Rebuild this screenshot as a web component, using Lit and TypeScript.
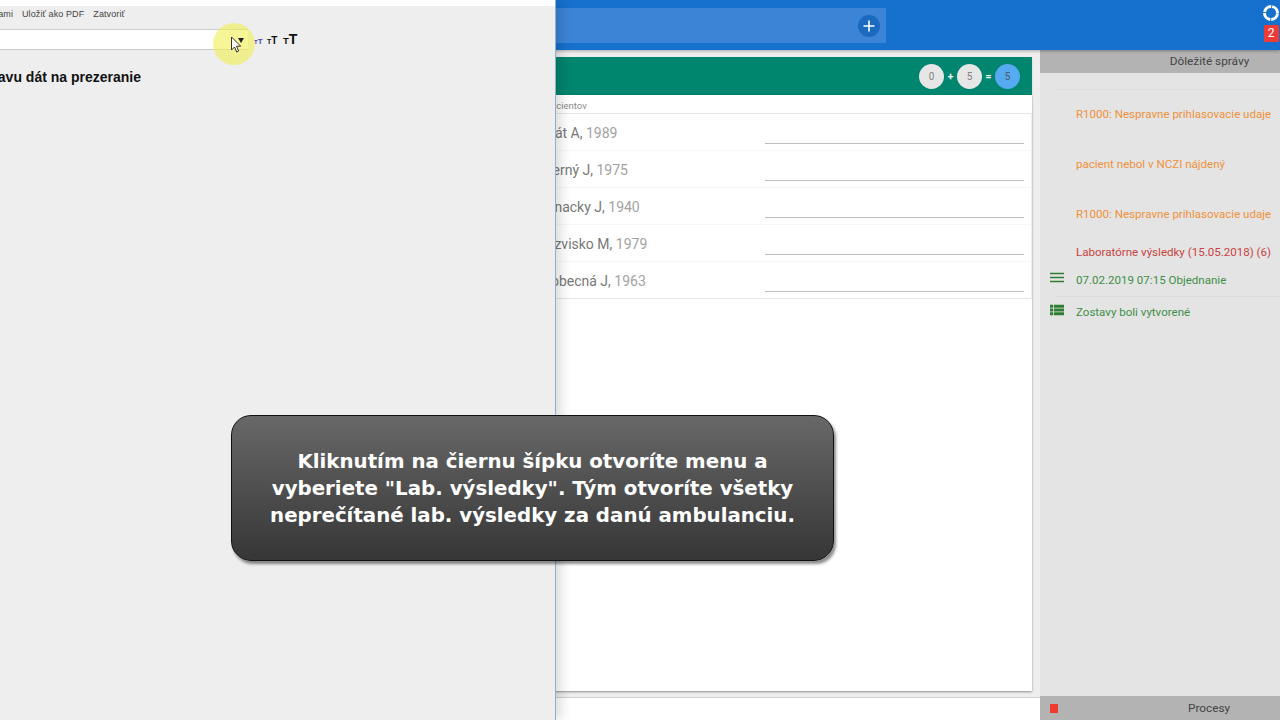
import { LitElement, html, css } from "lit";
import { customElement } from "lit/decorators.js";

const patients = [
  ["Donát A", "1989"],
  ["Ječerný J", "1975"],
  ["Bohnacky J", "1940"],
  ["Priezvisko M", "1979"],
  ["Kmobecná J", "1963"],
];

@customElement("app-root")
export class AppRoot extends LitElement {
  static styles = css`
    :host { display: block; width: 1280px; height: 720px; position: relative; overflow: hidden; font-family: Roboto, "Liberation Sans", sans-serif; background: #eee; }
    .app { display: grid; grid-template-rows: 50px 1fr; height: 720px; }
    .top { background: #1670cd; box-shadow: 0 1px 3px rgba(0,0,0,.3); display: flex; justify-content: space-between; padding: 8px 1px 0 0; z-index: 1; box-sizing: border-box; }
    .search { width: 886px; height: 35px; background: #3b84d6; display: flex; justify-content: flex-end; align-items: center; padding-right: 6px; box-sizing: border-box; }
    .plus { width: 22px; height: 22px; border-radius: 50%; background: #1c69c0; display: grid; place-items: center; }
    .status { display: flex; flex-direction: column; align-items: center; gap: 4px; margin-top: -3px; width: 16px; }
    .badge { background: #ee3b36; color: #fff; font-size: 12px; width: 15px; height: 17px; line-height: 17px; text-align: center; border-radius: 1px; }
    .body { display: grid; grid-template-columns: 1fr 240px; min-height: 0; }
    .main { display: flex; flex-direction: column; min-height: 0; }
    .content { flex: 1; display: flex; flex-direction: column; padding: 7px 8px 0 0; min-height: 0; }
    .teal { height: 38px; background: #00856f; display: flex; justify-content: flex-end; align-items: center; gap: 2.5px; padding-right: 12px; box-shadow: 0 1px 1px rgba(0,0,0,.25); color: #e8f3f0; font-size: 11px; font-weight: 700; flex: none; }
    .count { width: 25px; height: 25px; border-radius: 50%; background: #e6e6e6; color: #808080; font-size: 10px; font-weight: 400; display: grid; place-items: center; }
    .count.total { background: #55aaf0; color: #4a5a68; }
    .op { width: 8px; text-align: center; }
    .card { flex: 1; background: #fff; box-shadow: 0 1px 2px rgba(0,0,0,.4); display: flex; flex-direction: column; }
    .caption { height: 18px; line-height: 22px; padding-left: 509px; font-size: 9.5px; color: #8a8a8a; box-sizing: border-box; flex: none; }
    .rows { border-top: 1px solid #e6e6e6; border-bottom: 1px solid #e6e6e6; border-right: 1px solid #eee; }
    .row { height: 37px; box-sizing: border-box; display: grid; grid-template-columns: 765px 259px; border-bottom: 1px solid #f7f7f7; }
    .row:last-child { border-bottom: 0; height: 36px; }
    .name { padding-left: 530px; line-height: 38px; font-size: 14px; color: #a2a2a2; white-space: nowrap; }
    .name b { font-weight: 400; color: #787878; }
    .line { height: 29px; border-bottom: 1px solid #bdbdbd; }
    .foot { height: 22px; background: #fff; border-top: 1px solid #cfcfcf; margin-top: 6px; flex: none; }
    .side { background: #e4e4e4; display: flex; flex-direction: column; }
    .sidehead { height: 23px; line-height: 23px; background: #b3b3b3; color: #444; font-size: 11.8px; text-align: center; padding-left: 99px; box-sizing: border-box; flex: none; }
    .msgs { flex: 1; padding: 16px 0 0 16px; font-size: 11.55px; }
    .msg { display: grid; grid-template-columns: 20px 1fr; align-items: center; white-space: nowrap; box-sizing: border-box; }
    .msg span { grid-column: 2; }
    .msg svg { grid-column: 1; margin-left: -6px; margin-top: -4px; }
    .msg.o { height: 50px; color: #f0913a; }
    .msg.o:first-child { border-top: 1px solid #ddd; padding-bottom: 2px; }
    .msg.r { height: 27px; padding-bottom: 2px; color: #c9433f; }
    .msg.g { height: 30px; padding-bottom: 2px; color: #3f8f48; }
    .msg.g + .msg.g { height: 32px; padding-bottom: 2px; border-top: 1px solid #dcdcdc; }
    .sidefoot { height: 24px; background: #b3b3b3; display: flex; align-items: center; padding-left: 10px; color: #444; font-size: 11.8px; flex: none; }
    .sidefoot i { width: 8px; height: 9px; background: #ee3b30; }
    .sidefoot span { margin-left: 130px; }
    .win { position: absolute; left: 0; top: 0; width: 555px; height: 720px; background: #eee; border-right: 1px solid #8eb0cc; box-shadow: 4px 0 12px rgba(0,0,0,.16); font-family: "Liberation Sans", Arial, sans-serif; z-index: 2; display: flex; flex-direction: column; }
    .strip { height: 6px; background: #fff; flex: none; }
    .menu { width: 125px; height: 16px; display: flex; justify-content: flex-end; align-items: center; gap: 9px; overflow: hidden; font-size: 9px; letter-spacing: .1px; color: #444; white-space: nowrap; flex: none; }
    .tools { display: flex; align-items: center; flex: none; height: 21px; margin-top: 7px; }
    .input { width: 248px; height: 21px; background: #fff; border-top: 1px solid #ccc; border-bottom: 1px solid #ccc; box-sizing: border-box; display: flex; justify-content: flex-end; padding: 8px 4px 0 0; }
    .tri { width: 0; height: 0; border-left: 3px solid transparent; border-right: 3px solid transparent; border-top: 5px solid #222; position: relative; z-index: 1; }
    .sizes { display: flex; align-items: baseline; margin: -2px 0 0 6px; font-weight: 700; color: #111; line-height: 1; }
    .sizes span { display: flex; align-items: baseline; }
    .s1 { font-size: 6px; color: #4b46b0; width: 13px; } .s1 u { font-size: 8px; }
    .s2 { font-size: 7px; width: 16px; } .s2 u { font-size: 10px; }
    .s3 { font-size: 9.5px; } .s3 u { font-size: 14px; }
    u { text-decoration: none; }
    .title { width: 141px; display: flex; justify-content: flex-end; overflow: hidden; white-space: nowrap; font-size: 14px; font-weight: 700; color: #111; margin-top: 19px; flex: none; }
    .glow { position: absolute; left: 213px; top: 23px; width: 42px; height: 42px; border-radius: 50%; background: rgba(240,240,80,.6); filter: blur(.6px); }
    .cursor { position: absolute; left: 230px; top: 36px; }
    .tip { position: absolute; left: 231px; top: 415px; width: 603px; height: 146px; box-sizing: border-box; z-index: 3; border: 1.5px solid #111; border-radius: 20px; background: linear-gradient(#686868, #363636); box-shadow: 2px 3px 3px rgba(0,0,0,.45); color: #fff; font-family: "DejaVu Sans", Verdana, sans-serif; font-weight: 700; font-size: 19.8px; line-height: 27px; text-align: center; display: flex; align-items: center; justify-content: center; }
  `;

  render() {
    return html`
      <div class="app">
        <header class="top">
          <div class="search">
            <div class="plus"><svg width="12" height="12" viewBox="0 0 12 12"><path d="M6 .5v11M.5 6h11" stroke="#fff" stroke-width="1.6"/></svg></div>
          </div>
          <div class="status">
            <svg width="16" height="16" viewBox="0 0 16 16"><circle cx="8" cy="8" r="6.5" fill="none" stroke="#fff" stroke-width="3" stroke-dasharray="9.2 1" stroke-dashoffset="-0.5"/></svg>
            <div class="badge">2</div>
          </div>
        </header>
        <div class="body">
          <div class="main">
            <div class="content">
              <div class="teal">
                <div class="count">0</div><span class="op">+</span>
                <div class="count">5</div><span class="op">=</span>
                <div class="count total">5</div>
              </div>
              <div class="card">
                <div class="caption">Zoznam pacientov</div>
                <div class="rows">
                  ${patients.map(([n, y]) => html`<div class="row"><div class="name"><b>${n},</b> ${y}</div><div class="line"></div></div>`)}
                </div>
              </div>
            </div>
            <div class="foot"></div>
          </div>
          <aside class="side">
            <div class="sidehead">Dôležité správy</div>
            <div class="msgs">
              <div class="msg o"><span>R1000: Nespravne prihlasovacie udaje</span></div>
              <div class="msg o"><span>pacient nebol v NCZI nájdený</span></div>
              <div class="msg o"><span>R1000: Nespravne prihlasovacie udaje</span></div>
              <div class="msg r"><span>Laboratórne výsledky (15.05.2018) (6)</span></div>
              <div class="msg g">
                <svg width="14" height="12" viewBox="0 0 14 12"><path d="M0 1.5h14M0 5.5h14M0 9.5h14" stroke="#2e7d32" stroke-width="1.4"/></svg>
                <span>07.02.2019 07:15 Objednanie</span>
              </div>
              <div class="msg g">
                <svg width="14" height="12" viewBox="0 0 14 12"><path d="M0 .8h3.2v3H0zM4 .8h10v3H4zM0 4.5h3.2v3H0zM4 4.5h10v3H4zM0 8.2h3.2v3H0zM4 8.2h10v3H4z" fill="#2e7d32"/></svg>
                <span>Zostavy boli vytvorené</span>
              </div>
            </div>
            <div class="sidefoot"><i></i><span>Procesy</span></div>
          </aside>
        </div>
      </div>
      <section class="win">
        <div class="strip"></div>
        <nav class="menu"><span>Akcie s dátami</span><span>Uložiť ako PDF</span><span>Zatvoriť</span></nav>
        <div class="tools">
          <div class="input"><div class="tri"></div></div>
          <div class="sizes">
            <span class="s1">T<u>T</u></span><span class="s2">T<u>T</u></span><span class="s3">T<u>T</u></span>
          </div>
        </div>
        <div class="title">Výber zostavu dát na prezeranie</div>
        <div class="glow"></div>
        <svg class="cursor" width="14" height="18" viewBox="0 0 14 18"><path d="M1.5 1v13l3-3 2.2 5 2-1-2.2-4.8h4.2z" fill="#fff" stroke="#333" stroke-width="1"/></svg>
      </section>
      <div class="tip"><div>Kliknutím na čiernu šípku otvoríte menu a<br>vyberiete "Lab. výsledky". Tým otvoríte všetky<br>neprečítané lab. výsledky za danú ambulanciu.</div></div>
    `;
  }
}
